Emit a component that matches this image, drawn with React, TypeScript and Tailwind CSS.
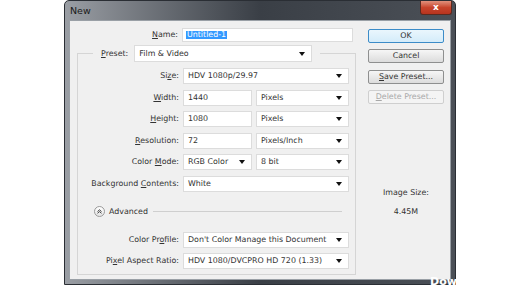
import React from "react"

const font = { fontFamily: '"DejaVu Sans", Verdana, sans-serif' }

function Key({ children }: { children: React.ReactNode }) {
  return <span className="underline underline-offset-[1px]">{children}</span>
}

function Label({ children }: { children: React.ReactNode }) {
  return <div className="w-[105px] shrink-0 text-right pr-[4px] leading-none whitespace-nowrap">{children}</div>
}

function Arrow() {
  return (
    <svg width="6" height="4" viewBox="0 0 6 4" className="shrink-0">
      <path d="M0 0h6L3 4z" fill="#111" />
    </svg>
  )
}

function Select({ value, w }: { value: string; w: string }) {
  return (
    <div className={`${w} h-full bg-white border border-[#dcdcdc] flex items-center justify-between pl-[4px] pr-[6px]`}>
      <span className="leading-none whitespace-nowrap">{value}</span>
      <Arrow />
    </div>
  )
}

function Input({ value, w }: { value: string; w: string }) {
  return (
    <div className={`${w} h-full bg-white border border-[#dcdcdc] flex items-center pl-[4px]`}>
      <span className="leading-none">{value}</span>
    </div>
  )
}

function Row({ label, children }: { label: React.ReactNode; children: React.ReactNode }) {
  return (
    <div className="h-[16px] flex items-center">
      <Label>{label}</Label>
      <div className="flex h-full gap-[4px]">{children}</div>
    </div>
  )
}

function Btn({ children, primary, disabled }: { children: React.ReactNode; primary?: boolean; disabled?: boolean }) {
  return (
    <div
      className={`h-[14px] rounded-[2px] flex items-center justify-center leading-none whitespace-nowrap border ${
        primary
          ? "border-[#3c8cc8] bg-gradient-to-b from-[#eaf6fd] to-[#d4ecfa]"
          : disabled
            ? "border-[#cfcfcf] bg-[#f4f4f4] text-[#a8a8a8]"
            : "border-[#8e8f8f] bg-gradient-to-b from-[#f6f6f6] to-[#dcdcdc]"
      }`}
    >
      {children}
    </div>
  )
}

export default function App() {
  return (
    <div className="w-[520px] h-[287px] bg-white relative overflow-hidden text-[7.9px] text-[#333]" style={font}>
      <div className="ml-[64px] w-[392px] h-[285px] rounded-t-[5px] bg-gradient-to-r from-[#9a9ea4] via-[#3a3f46] to-[#4b5057] flex flex-col border border-[#2a2e34]">
        {/* title bar */}
        <div className="h-[19px] shrink-0 flex items-start justify-between">
          <span className="text-[9.5px] text-[#1a1a1a] mt-[5px] ml-[5px] leading-none">New</span>
          <div className="w-[32px] h-[14px] mr-[3px] rounded-b-[3px] border border-[#5a2a20] border-t-0 bg-gradient-to-b from-[#e0907c] via-[#c7442c] to-[#b8341e] flex items-center justify-center">
            <span className="text-white text-[9px] font-bold leading-none">x</span>
          </div>
        </div>

        {/* client area */}
        <div className="flex-1 mx-[4px] mb-[4px] bg-[#f0f0f0] border border-[#9aa0a6] flex pl-[7px] pt-[7px]">
          <div className="w-[279px] flex flex-col">
            <div className="h-[14px] flex items-center">
              <Label>
                <Key>N</Key>ame:
              </Label>
              <div className="w-[171px] h-full bg-white border border-[#dcdcdc] flex items-center pl-[3px]">
                <span className="bg-[#3399ff] text-white leading-none px-[1px]">Untitled-1</span>
              </div>
            </div>

            <fieldset className="mt-[3px] border border-[#d5d5d5] flex flex-col pb-[5px]">
              <legend className="ml-[15px] px-[8px] h-[17px] flex items-center">
                <span className="leading-none pr-[6px]">
                  <Key>P</Key>reset:
                </span>
                <Select value="Film & Video" w="w-[178px]" />
              </legend>

              <div className="flex flex-col gap-[5.6px] mt-[6px]">
                <Row
                  label={
                    <>
                      Si<Key>z</Key>e:
                    </>
                  }
                >
                  <Select value="HDV 1080p/29.97" w="w-[166px]" />
                </Row>
                <Row
                  label={
                    <>
                      <Key>W</Key>idth:
                    </>
                  }
                >
                  <Input value="1440" w="w-[69px]" />
                  <Select value="Pixels" w="w-[93px]" />
                </Row>
                <Row
                  label={
                    <>
                      <Key>H</Key>eight:
                    </>
                  }
                >
                  <Input value="1080" w="w-[69px]" />
                  <Select value="Pixels" w="w-[93px]" />
                </Row>
                <Row
                  label={
                    <>
                      <Key>R</Key>esolution:
                    </>
                  }
                >
                  <Input value="72" w="w-[69px]" />
                  <Select value="Pixels/Inch" w="w-[93px]" />
                </Row>
                <Row
                  label={
                    <>
                      Color <Key>M</Key>ode:
                    </>
                  }
                >
                  <Select value="RGB Color" w="w-[69px]" />
                  <Select value="8 bit" w="w-[93px]" />
                </Row>
                <Row
                  label={
                    <>
                      Background <Key>C</Key>ontents:
                    </>
                  }
                >
                  <Select value="White" w="w-[166px]" />
                </Row>
              </div>

              <div className="h-[12px] mt-[14px] flex items-center pl-[16px] pr-[13px]">
                <div className="w-[11px] h-[11px] rounded-full border border-[#9a9a9a] bg-gradient-to-b from-white to-[#e4e4e4] flex items-center justify-center">
                  <svg width="5" height="5" viewBox="0 0 5 5">
                    <path d="M0.5 2.5L2.5 0.8L4.5 2.5M0.5 4.3L2.5 2.6L4.5 4.3" fill="none" stroke="#333" strokeWidth="0.9" />
                  </svg>
                </div>
                <span className="ml-[4px] leading-none">Advanced</span>
                <div className="flex-1 ml-[5px] h-px bg-[#cfcfcf]" />
              </div>

              <div className="flex flex-col gap-[5px] mt-[14px]">
                <Row
                  label={
                    <>
                      Color Pr<Key>o</Key>file:
                    </>
                  }
                >
                  <Select value="Don't Color Manage this Document" w="w-[166px]" />
                </Row>
                <Row
                  label={
                    <>
                      Pi<Key>x</Key>el Aspect Ratio:
                    </>
                  }
                >
                  <Select value="HDV 1080/DVCPRO HD 720 (1.33)" w="w-[166px]" />
                </Row>
              </div>
            </fieldset>
          </div>

          <div className="ml-[12px] w-[76px] flex flex-col">
            <div className="flex flex-col gap-[6.3px] pt-[1px]">
              <Btn primary>OK</Btn>
              <Btn>Cancel</Btn>
              <Btn>
                <span>
                  <Key>S</Key>ave Preset...
                </span>
              </Btn>
              <Btn disabled>
                <span>
                  <Key>D</Key>elete Preset...
                </span>
              </Btn>
            </div>
            <div className="mt-[85px] text-center leading-none">Image Size:</div>
            <div className="mt-[11px] text-center leading-none">4.45M</div>
          </div>
        </div>
      </div>
      <span className="absolute left-[430px] top-[276px] text-white font-bold text-[11px] leading-none">Dow</span>
    </div>
  )
}
